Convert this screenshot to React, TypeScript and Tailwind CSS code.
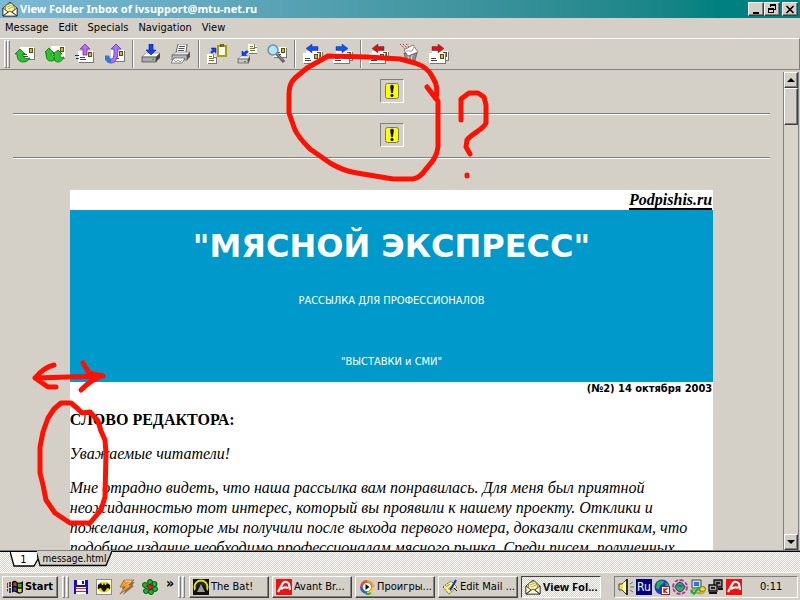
import type { ReactNode } from "react";

const raised =
  "border border-t-white border-l-white border-r-[#404040] border-b-[#404040] shadow-[inset_-1px_-1px_0_#808080] bg-[#d4d0c8]";
const dither =
  "bg-[repeating-conic-gradient(#ffffff_0_25%,#d4d0c8_0_50%)] bg-[length:2px_2px]";

function Icon({ w = 20, h = 20, children }: { w?: number; h?: number; children: ReactNode }) {
  return (
    <svg width={w} height={h} viewBox={`0 0 ${w} ${h}`} className="shrink-0" aria-hidden="true">
      {children}
    </svg>
  );
}

function Letter({ x, y, w = 14, h = 10 }: { x: number; y: number; w?: number; h?: number }) {
  return (
    <g shapeRendering="crispEdges">
      <rect x={x + 1} y={y + 1} width={w} height={h} fill="#777" />
      <rect x={x} y={y} width={w} height={h} fill="#fff" />
      <rect x={x + w - 5} y={y + 1} width="4" height="5" fill="#5a4a10" />
      <rect x={x + w - 4} y={y + 2} width="2" height="3" fill="#d8b820" />
      <path d={`M${x + 2} ${y + h - 4.5}h5M${x + 2} ${y + h - 2.5}h6`} stroke="#444" />
    </g>
  );
}

function Sheet({ x, y }: { x: number; y: number }) {
  return (
    <g shapeRendering="crispEdges">
      <path d={`M${x} ${y}h6l3 3v7h-9z`} fill="#fffde0" />
      <path d={`M${x + 0.5} ${y + 9.5}h8.500v-6.500h-3v-3`} fill="none" stroke="#777" />
      <path d={`M${x + 2} ${y + 2.5}h3M${x + 2} ${y + 4.5}h5M${x + 2} ${y + 6.5}h5`} stroke="#77773a" />
    </g>
  );
}

function Tray({ x, y }: { x: number; y: number }) {
  return (
    <g>
      <path d={`M${x} ${y + 3}l3-3h9l-2 3z`} fill="#f4f4f4" stroke="#888" strokeWidth=".6" />
      <path d={`M${x + 10} ${y + 3}l2-3v4l-2 4z`} fill="#555" />
      <rect x={x} y={y + 3} width="10" height="4" fill="#c8c8c8" stroke="#555" strokeWidth=".7" />
      <rect x={x + 6} y={y + 5} width="2" height="1" fill="#1a1" />
    </g>
  );
}

const ReplyIcon = () => (
  <Icon>
    <Letter x={5} y={3} w={14} h={12} />
    <path d="M5 5l5 5H8c0 4 2 5 7 4-2 3-4 4-7 4-4 0-6-3-6-8H0z" fill="#2cc42c" stroke="#0b6a10" strokeWidth=".8" />
  </Icon>
);
const ReplyAllIcon = () => (
  <Icon>
    <Letter x={6} y={2} w={14} h={12} />
    <path d="M4 4l5 5H7c0 4 1 5 4 5-2 3-3 3-5 3-4 0-5-3-5-8h-2z" fill="#2cc42c" stroke="#0b6a10" strokeWidth=".8" />
    <path d="M13 6l4 4h-2c0 3 1 4 4 3-2 4-4 5-6 5-4 0-4-3-4-8H8z" fill="#2cc42c" stroke="#0b6a10" strokeWidth=".8" />
  </Icon>
);
const ForwardIcon = () => (
  <Icon>
    <Letter x={3} y={7} w={15} h={11} />
    <path d="M0 11.500h4M1 14.500h3" stroke="#333" />
    <path d="M10 0l5 5h-3v6H8V5H5z" fill="#c268f0" stroke="#7030a0" strokeWidth=".8" />
  </Icon>
);
const RedirectIcon = () => (
  <Icon>
    <Letter x={6} y={6} w={13} h={11} />
    <path d="M11 0l5 5h-3c0 9-2 14-7 14-4 0-6-3-6-7h4c0 2 0 3 2 3 3 0 3-4 3-10H6z" fill="#b070ff" stroke="#5040b0" strokeWidth=".8" />
    <path d="M0 12h4c0 2 0 3 2 3v4c-4 0-6-3-6-7z" fill="#2a78e8" />
  </Icon>
);
const SaveIcon = () => (
  <Icon>
    <path d="M1 13l4-4h14l-4 4z" fill="#fafafa" stroke="#777" strokeWidth=".6" />
    <rect x="1" y="13" width="14" height="5" fill="#aaa" stroke="#444" strokeWidth=".7" />
    <path d="M15 13l4-4v5l-4 4z" fill="#444" />
    <rect x="11" y="15" width="2" height="1" fill="#0b0" />
    <path d="M8 0h4v6h3l-5 5-5-5h3z" fill="#1440f0" stroke="#0018a0" strokeWidth=".6" />
  </Icon>
);
const PrintIcon = () => (
  <Icon>
    <path d="M7 0h9l-1 9H5z" fill="#fff" stroke="#444" strokeWidth=".8" />
    <path d="M8 2.500h6M7.500 4.500h6M7 6.500h6" stroke="#555" />
    <path d="M1 11l4-3h14l-3 3z" fill="#e8e8e8" stroke="#777" strokeWidth=".6" />
    <path d="M1 11h15v5H1z" fill="#bbb" stroke="#555" strokeWidth=".7" />
    <path d="M16 11l3-3v5l-3 3z" fill="#555" />
    <path d="M3 14h11l-3 5H0z" fill="#fff" stroke="#555" strokeWidth=".7" />
    <path d="M3 16l2 2 2-2 2 2 2-2" fill="none" stroke="#888" strokeWidth=".8" />
  </Icon>
);
const BlueDiag = ({ d }: { d: string }) => <path d={d} fill="#1440f0" stroke="#0018a0" strokeWidth=".5" />;
const CopyIcon = () => (
  <Icon>
    <Sheet x={0} y={10} />
    <BlueDiag d="M4 4h5v5L7 7.500 5 9.500 3.500 8 5.500 6z" />
    <rect x="11" y="2" width="8" height="10" fill="#fff" stroke="#a8a000" strokeWidth="2" />
    <rect x="13" y="0" width="4" height="3" fill="#6a6a30" />
  </Icon>
);
const MoveIcon = () => (
  <Icon>
    <Sheet x={11} y={0} />
    <BlueDiag d="M5 12V7l2 1.500 3-2L11.500 8 8.500 10 10 12z" />
    <Tray x={1} y={12} />
  </Icon>
);
const FindIcon = () => (
  <Icon>
    <Letter x={6} y={3} w={13} h={10} />
    <circle cx="6" cy="6" r="5" fill="#b4e4f8" stroke="#6a90a8" strokeWidth="1.500" />
    <path d="M10 10l7 8" stroke="#555" strokeWidth="3" />
    <path d="M10 10l6.500 7" stroke="#aaa" />
  </Icon>
);
function StackIcon({ dir, color }: { dir: "left" | "right"; color: string }) {
  return (
    <Icon>
      <Letter x={3} y={7} w={16} h={9} />
      <Letter x={0} y={9} w={16} h={10} />
      <path
        d={dir === "left" ? "M3 4.500L9 0v2.500h6v4H9V9z" : "M15 4.500L9 0v2.500H3v4h6V9z"}
        fill={color}
        stroke="#202060"
        strokeWidth=".4"
      />
    </Icon>
  );
}
const DeleteIcon = () => (
  <Icon>
    <path d="M1 0l5 5M4 0l5 5M7 0l3 3" stroke="#e03030" strokeDasharray="1.500 1" />
    <path d="M5 9l2 9 8 2 3-11z" fill="#8c8c8c" stroke="#555" strokeWidth=".7" />
    <path d="M9 11l1 7M13 11l-1 7" stroke="#ddd" />
    <path d="M5 6l9-5 5 7-10 4z" fill="#fff" stroke="#555" strokeWidth=".7" />
    <path d="M7 7l6 0 2-4" fill="none" stroke="#777" strokeWidth=".7" />
  </Icon>
);

const toolGroups: { name: string; icon: ReactNode }[][] = [
  [
    { name: "Reply", icon: <ReplyIcon /> },
    { name: "Reply to all", icon: <ReplyAllIcon /> },
    { name: "Forward", icon: <ForwardIcon /> },
    { name: "Redirect", icon: <RedirectIcon /> },
  ],
  [
    { name: "Save", icon: <SaveIcon /> },
    { name: "Print", icon: <PrintIcon /> },
  ],
  [
    { name: "Copy", icon: <CopyIcon /> },
    { name: "Move", icon: <MoveIcon /> },
    { name: "Find", icon: <FindIcon /> },
  ],
  [
    { name: "Previous", icon: <StackIcon dir="left" color="#1450ff" /> },
    { name: "Next", icon: <StackIcon dir="right" color="#1450ff" /> },
  ],
  [
    { name: "Previous unread", icon: <StackIcon dir="left" color="#e01010" /> },
    { name: "Delete", icon: <DeleteIcon /> },
    { name: "Next unread", icon: <StackIcon dir="right" color="#e01010" /> },
  ],
];

const OpenLetter = () => (
  <Icon w={16} h={16}>
    <path d="M1 7l7-6 7 6v8H1z" fill="#f4e87a" stroke="#222" strokeWidth=".8" />
    <path d="M4 4l6-2 3 6-5 4-5-3z" fill="#fff68a" stroke="#555" strokeWidth=".7" />
    <path d="M5 6l5-2M6 8l5-2" stroke="#999" strokeWidth=".8" />
    <path d="M1 7l5 4-5 4zM15 7l-5 4 5 4zM1 15l7-5 7 5z" fill="#fffbd8" stroke="#222" strokeWidth=".7" />
  </Icon>
);
const BatIcon = () => (
  <Icon w={16} h={16}>
    <rect width="16" height="16" fill="#111" />
    <circle cx="8" cy="8" r="6.500" fill="#222" stroke="#e8e000" strokeWidth="2" />
    <path d="M0 16c1-5 4-9 8-10 4 1 7 5 8 10z" fill="#111" />
    <path d="M8 5l4 8H4z" fill="#999" />
  </Icon>
);
const AvantIcon = () => (
  <Icon w={16} h={16}>
    <rect width="16" height="16" fill="#f01010" />
    <path d="M2 13L7 4c2-2 5-1 6 1l1 6M5 10c3-2 5-2 7-1" fill="none" stroke="#fff" strokeWidth="2.200" />
  </Icon>
);
const PlayerIcon = () => (
  <Icon w={16} h={16}>
    <path d="M8 8V1a7 7 0 0 1 7 7z" fill="#f0a020" />
    <path d="M8 8h7a7 7 0 0 1-7 7z" fill="#f8d020" />
    <path d="M8 8v7a7 7 0 0 1-7-7z" fill="#2060d8" />
    <path d="M8 8H1a7 7 0 0 1 7-7z" fill="#e85020" />
    <path d="M7 15a7 7 0 0 0 5-1" stroke="#38a838" strokeWidth="2" fill="none" />
    <circle cx="8" cy="8" r="4.500" fill="#fff" stroke="#567" strokeWidth=".7" />
    <path d="M6.500 5l4 3-4 3z" fill="#111" />
  </Icon>
);
const EditIcon = () => (
  <Icon w={16} h={16}>
    <path d="M1 8l8-6 6 6-8 7z" fill="#fff27a" stroke="#333" strokeWidth=".8" strokeDasharray="1.500 .8" />
    <path d="M4 8l4-3M6 10l5-4M8 12l4-3" stroke="#777" strokeWidth=".8" />
    <path d="M14 1l-4 7-2 3" stroke="#1030d0" strokeWidth="2" fill="none" />
    <path d="M12 9l3 3" stroke="#111" />
  </Icon>
);
const FloppyIcon = () => (
  <Icon w={16} h={16}>
    <path d="M1 1h14v14H1z" fill="#1010c8" />
    <path d="M4 1h8v5H4z" fill="#fff" />
    <path d="M9 2h2v3H9z" fill="#1010c8" />
    <path d="M3 8h10v7H3z" fill="#fff" />
    <path d="M3 9.500h10M3 12.500h10" stroke="#e02020" />
  </Icon>
);
const YellowBatIcon = () => (
  <Icon w={16} h={16}>
    <rect x=".5" y=".5" width="15" height="15" fill="#fff" stroke="#333" strokeDasharray="1 1" />
    <ellipse cx="8" cy="8" rx="7" ry="5.500" fill="#f0e000" />
    <path d="M2 6l3-2 1 2h1l1-2 1 2h1l1-2 3 2 0 4-3-1-1 2-2 2-2-2-1-2-3 1z" fill="#111" />
  </Icon>
);
const BoltIcon = () => (
  <Icon w={16} h={16}>
    <path d="M6 3h10l-4 4h3L4 16l3-6H3z" fill="#777" />
    <path d="M5 1h10l-5 5h4L1 15l5-7H1z" fill="#f09838" stroke="#8a5010" strokeWidth=".6" />
    <path d="M6 2h6L8 6" stroke="#ffd9a0" fill="none" />
  </Icon>
);
const FlowerIcon = () => (
  <Icon w={16} h={16}>
    <g fill="#18b828" stroke="#044a08" strokeWidth=".9">
      <circle cx="8" cy="3" r="2.500" />
      <circle cx="12.500" cy="5" r="2.500" />
      <circle cx="13" cy="10" r="2.500" />
      <circle cx="9" cy="13" r="2.500" />
      <circle cx="4" cy="12" r="2.500" />
      <circle cx="3" cy="6" r="2.500" />
    </g>
    <circle cx="8" cy="8" r="2.500" fill="#e02030" stroke="#300" strokeWidth=".6" />
  </Icon>
);
const WindowsFlag = () => (
  <Icon w={16} h={14}>
    <path d="M5 2c2-2 4-1 5 0s4 1 6-1v11c-2 2-4 2-6 1s-3-2-5 0z" fill="#111" />
    <path d="M6.500 3c1-1 2-1 3 0v3.500c-1-1-2-1-3 0z" fill="#e83020" />
    <path d="M11 3.500c1 .5 2.500.5 3.500 0V7c-1 .5-2.500.5-3.500 0z" fill="#30b030" />
    <path d="M6.500 8c1-1 2-1 3 0v3c-1-1-2-1-3 0z" fill="#2848e0" />
    <path d="M11 8.500c1 .5 2.500.5 3.500 0V12c-1 .5-2.500.5-3.500-.5z" fill="#f0d020" />
    <path d="M0 4h1M2 3h2M0 7h1M2 6h2M0 10h1M2 9h2M2 12h2" stroke="#111" strokeWidth="1.500" />
    <path d="M0 5.500h1M2 4.500h2" stroke="#e83020" />
    <path d="M0 11h1M2 10.500h2" stroke="#2848e0" />
  </Icon>
);
const SpeakerIcon = () => (
  <Icon w={16} h={16}>
    <path d="M1 5h3l5-5v16l-5-5H1z" fill="#f0e060" stroke="#222" strokeWidth=".8" />
    <path d="M5 4l3-2v12l-3-3z" fill="#fff8b0" />
    <path d="M9 0v16" stroke="#111" strokeWidth="1.500" />
    <path d="M12 5l3-2M12 8h4M12 11l3 2" stroke="#666" />
  </Icon>
);
const GlobeKIcon = () => (
  <Icon w={16} h={16}>
    <circle cx="8" cy="8" r="7.500" fill="#1838d8" />
    <path d="M3 4c2-3 5-3 7-2l-1 3-3 1-1 4-3-1zM11 3l3 2 1 3h-3z" fill="#20b838" />
    <rect x="7.500" y="7.500" width="8" height="8" fill="#fff" stroke="#c01010" />
    <path d="M10 9v5M13.500 9L10 12l3.500 2" stroke="#d01010" strokeWidth="1.400" fill="none" />
  </Icon>
);
const NetGlobeIcon = () => (
  <Icon w={16} h={16}>
    <circle cx="8" cy="8" r="4.500" fill="#38a858" stroke="#246" />
    <path d="M5 7c2-2 4 2 6-1" stroke="#3060c0" strokeWidth="2" fill="none" />
    <circle cx="8" cy="8" r="7" fill="none" stroke="#e81890" strokeWidth="1.800" strokeDasharray="3.500 2" />
    <path d="M0 8h3M13 8h3M8 0v3M8 13v3" stroke="#18a0a0" />
  </Icon>
);
const PcCheckIcon = () => (
  <Icon w={16} h={16}>
    <path d="M2 1h9v8H2z" fill="#d8d8d8" stroke="#444" />
    <path d="M4 3h5v4H4z" fill="#2878e0" />
    <path d="M1 11h9v3H1z" fill="#ccc" stroke="#555" strokeWidth=".7" />
    <ellipse cx="12.500" cy="10" rx="3" ry="2.500" fill="#f0d830" stroke="#554400" strokeWidth=".7" />
    <path d="M7 14c3 1 6 1 8-2" stroke="#c8a800" strokeWidth="1.500" fill="none" />
    <path d="M1 11l3 4 5-7" stroke="#10c010" strokeWidth="2" fill="none" />
  </Icon>
);
const ComputersIcon = () => (
  <Icon w={16} h={16}>
    <g stroke="#111" strokeWidth="1.300">
      <path d="M6 1h8v7H6z" fill="#888" />
      <path d="M1 6h8v6H1z" fill="#aaa" />
      <path d="M1 14h8M10 10h5" strokeWidth="2" />
    </g>
    <path d="M8 3h4v2H8zM3 8h4v2H3z" fill="#222" />
  </Icon>
);

const windowButton = `${raised} flex h-[14px] w-4 items-center justify-center`;

function TitleBar() {
  return (
    <header className="flex h-[18px] shrink-0 items-center bg-linear-to-r from-[#7cb9d8] to-[#008080] to-90% pr-[2px] pl-[2px]">
      <OpenLetter />
      <h1 className="ml-[2px] flex-1 truncate font-['Noto_Sans','DejaVu_Sans',sans-serif] text-[11px] leading-[18px] font-bold text-white">
        View Folder Inbox of ivsupport@mtu-net.ru
      </h1>
      <button type="button" aria-label="Minimize" className={windowButton}>
        <Icon w={10} h={9}>
          <path d="M2 7h6v2H2z" fill="#000" />
        </Icon>
      </button>
      <button type="button" aria-label="Restore" className={windowButton}>
        <Icon w={10} h={10}>
          <path d="M3.500 3V.5h5v5H7M3 1.500h6M1.500 4.500h5v4h-5zM1 5.500h6" fill="none" stroke="#000" shapeRendering="crispEdges" />
        </Icon>
      </button>
      <button type="button" aria-label="Close" className={`${windowButton} ml-[2px]`}>
        <Icon w={10} h={9}>
          <path d="M1.500 1l7 7M8.500 1l-7 7" stroke="#000" strokeWidth="1.700" />
        </Icon>
      </button>
    </header>
  );
}

function MenuBar() {
  return (
    <nav className="flex h-5 shrink-0 items-center gap-[10px] pl-[5px]">
      {["Message", "Edit", "Specials", "Navigation", "View"].map((m) => (
        <button key={m} type="button">
          {m}
        </button>
      ))}
    </nav>
  );
}

function Grip() {
  return <span className="h-full w-[3px] shrink-0 border border-t-white border-l-white border-r-[#808080] border-b-[#808080]" />;
}

function Toolbar() {
  return (
    <div className="flex h-8 shrink-0 items-center border-t border-r border-b border-t-white border-r-[#808080] border-b-[#808080] pl-1">
      <div className="flex h-7">
        <Grip />
        <Grip />
      </div>
      {toolGroups.map((group, i) => (
        <div key={group[0].name} className="flex items-center">
          {i > 0 && <span className="mx-[2px] h-7 w-[2px] border-r border-l border-r-white border-l-[#808080]" />}
          {group.map((tool) => (
            <button key={tool.name} type="button" aria-label={tool.name} className="flex h-7 w-[30px] items-center justify-center">
              {tool.icon}
            </button>
          ))}
        </div>
      ))}
    </div>
  );
}

function BlockedImage() {
  return (
    <div>
      <div className="mx-auto flex size-6 items-center justify-center border border-t-[#808080] border-l-[#808080] border-r-white border-b-white">
        <Icon w={14} h={16}>
          <rect x=".5" y=".5" width="13" height="15" rx="2" fill="#ffff00" stroke="#777" />
          <path d="M5.500 3.500a1.500 1.500 0 0 1 3 0L7.500 10h-1z" fill="#000" stroke="#000" strokeWidth=".6" />
          <circle cx="7" cy="12.500" r="1.500" fill="#000" />
        </Icon>
      </div>
      <hr className="mt-[10px] mb-2 h-[2px] border-t border-b border-t-[#808080] border-b-white" />
    </div>
  );
}

function Newsletter() {
  return (
    <article className="mx-auto mt-[31px] w-[85%] bg-white font-['Liberation_Serif','Times_New_Roman',serif] text-[16px] leading-5 text-black">
      <p className="flex h-5 justify-end pr-px font-bold italic">
        <a href="#podpishis" className="border-b-2 border-black">
          Podpishis.ru
        </a>
      </p>
      <div className="flex h-[172px] flex-col items-center bg-[#0099cc] text-center font-['DejaVu_Sans_Condensed','DejaVu_Sans',sans-serif] text-[11px] text-white">
        <h2 className="mt-4 font-['DejaVu_Sans',sans-serif] text-[32px] leading-10 font-bold">"МЯСНОЙ ЭКСПРЕСС"</h2>
        <p className="mt-[25px]">РАССЫЛКА ДЛЯ ПРОФЕССИОНАЛОВ</p>
        <p className="mt-[41px]">"ВЫСТАВКИ и СМИ"</p>
      </div>
      <p className="pr-px text-right font-['DejaVu_Sans_Condensed','DejaVu_Sans',sans-serif] text-[11px] leading-[14px] font-bold">
        (№2) 14 октября 2003
      </p>
      <h3 className="mt-[14px] font-bold">СЛОВО РЕДАКТОРА:</h3>
      <p className="mt-[14px] italic">Уважаемые читатели!</p>
      <p className="mt-[14px] italic">
        Мне отрадно видеть, что наша рассылка вам понравилась. Для меня был приятной неожиданностью тот
        интерес, который вы проявили к нашему проекту. Отклики и пожелания, которые мы получили после
        выхода первого номера, доказали скептикам, что подобное издание необходимо профессионалам
        мясного рынка. Среди писем, полученных
      </p>
    </article>
  );
}

function Scrollbar() {
  const arrow = `${raised} flex h-4 w-full shrink-0 items-center justify-center`;
  return (
    <div className="mt-[2px] mr-px flex w-4 shrink-0 flex-col border-r border-l border-r-[#808080] border-l-[#808080] bg-[#d8d4cc]">
      <button type="button" aria-label="Scroll up" className={arrow}>
        <Icon w={8} h={4}>
          <path d="M4 0l4 4H0z" fill="#000" />
        </Icon>
      </button>
      <div className={`${raised} h-[37px] w-full`} />
      <div className="flex-1" />
      <button type="button" aria-label="Scroll down" className={arrow}>
        <Icon w={8} h={4}>
          <path d="M4 4l4-4H0z" fill="#000" />
        </Icon>
      </button>
    </div>
  );
}

function PartTabs() {
  return (
    <div className={`${dither} flex h-[22px] shrink-0 border-t border-[#808080]`}>
      <div className="w-[10px] border-t border-black" />
      <button type="button" className="relative h-4 w-[27px] border-t border-black">
        <svg width="28" height="16" viewBox="0 0 28 16" className="absolute -top-px left-0" aria-hidden="true">
          <path d="M0 1l4 14h20l4-7-3-7z" fill="#fff" />
          <path d="M0 .5l4 14.500h20l4-7" fill="none" stroke="#000" strokeWidth="1.300" />
        </svg>
        <span className="relative">1</span>
      </button>
      <button type="button" className="relative h-4 w-[75px] text-[10px]">
        <svg width="75" height="16" viewBox="0 0 75 16" className="absolute top-0 left-0" aria-hidden="true">
          <path d="M-1 0l4 14.500h66L75 0z" fill="#d4d0c8" />
          <path d="M-1 0l4 14.500h66L75 0" fill="none" stroke="#000" strokeWidth="1.300" />
        </svg>
        <span className="relative">message.html</span>
      </button>
      <div className="flex-1 border-t border-black" />
    </div>
  );
}

const quickLaunch = [
  { name: "Save tool", icon: <FloppyIcon /> },
  { name: "The Bat", icon: <YellowBatIcon /> },
  { name: "Winamp", icon: <BoltIcon /> },
  { name: "ICQ", icon: <FlowerIcon /> },
];

const tasks = [
  { title: "The Bat!", icon: <BatIcon /> },
  { title: "Avant Br...", icon: <AvantIcon /> },
  { title: "Проигры...", icon: <PlayerIcon /> },
  { title: "Edit Mail ...", icon: <EditIcon /> },
];

function Taskbar() {
  return (
    <footer className="flex h-7 shrink-0 items-center border-t border-white px-[2px]">
      <button type="button" className={`${raised} flex h-[22px] w-14 items-center justify-center gap-[2px] text-[11px] font-bold`}>
        <WindowsFlag />
        Start
      </button>
      <div className="ml-1 flex h-[22px] gap-px">
        <Grip />
        <Grip />
      </div>
      <div className="ml-1 flex gap-[7px]">
        {quickLaunch.map((q) => (
          <button key={q.name} type="button" aria-label={q.name}>
            {q.icon}
          </button>
        ))}
      </div>
      <button type="button" aria-label="More" className="ml-2 flex h-[22px] w-3 text-[14px] leading-[14px] font-bold">
        »
      </button>
      <div className="mr-1 flex h-[22px] gap-px">
        <Grip />
        <Grip />
      </div>
      <div className="flex gap-[3px]">
        {tasks.map((t) => (
          <button key={t.title} type="button" className={`${raised} flex h-[22px] w-20 items-center gap-[2px] pl-[3px] whitespace-nowrap`}>
            {t.icon}
            {t.title}
          </button>
        ))}
        <button
          type="button"
          className={`${dither} flex h-[22px] w-20 items-center gap-[2px] border border-t-[#404040] border-r-white border-b-white border-l-[#404040] pl-[3px] font-['Noto_Sans','DejaVu_Sans',sans-serif] font-bold whitespace-nowrap`}
        >
          <OpenLetter />
          View Fol...
        </button>
      </div>
      <div className="ml-auto flex h-[22px] w-[184px] items-center gap-[2px] border border-t-[#808080] border-r-white border-b-white border-l-[#808080] pl-[3px]">
        <SpeakerIcon />
        <span className="flex size-4 items-center justify-center bg-[#000080] text-[12px] leading-4 text-white">Ru</span>
        <GlobeKIcon />
        <NetGlobeIcon />
        <PcCheckIcon />
        <ComputersIcon />
        <AvantIcon />
        <time className="ml-4">0:11</time>
      </div>
    </footer>
  );
}

function PenMarks() {
  return (
    <svg
      width="800"
      height="600"
      viewBox="0 0 800 600"
      className="pointer-events-none absolute top-0 left-0"
      fill="none"
      stroke="#ff1000"
      strokeWidth="5"
      strokeLinecap="round"
      strokeLinejoin="round"
      aria-hidden="true"
    >
      <path d="M427 87L436 99C438 90 437 84 433 78C430 71 424 66 415 63L400 59L367 57L328 56L307 68L295 78C289 84 289 90 289 98V113L295 130C299 138 304 143 310 149L330 163C340 169 350 172 357 173L393 179H413C420 178 424 172 426 169C433 161 437 156 438 147V101L427 87" />
      <path d="M461 120V99L469 93H478L484 97L486 105V123C483 130 472 133 467 140L466 147L470 154M467 175v1" />
      <path d="M35 378L103 376M54 365C45 367 40 372 35 378L48 387H56M83 363L89 373L102 376C95 378 87 384 81 390" />
      <path d="M61 403H71L78 409L82 413L90 412L98 421L101 431L105 440L106 453L105 497L101 510L90 523H70L55 513L46 500L43 485L40 473V447L43 432L48 418L54 409Z" />
    </svg>
  );
}

export default function App() {
  return (
    <div className="relative flex h-screen flex-col overflow-hidden bg-[#d4d0c8] font-['DejaVu_Sans_Condensed','DejaVu_Sans',sans-serif] text-[11px] leading-[14px] text-black">
      <TitleBar />
      <MenuBar />
      <Toolbar />
      <main className="flex min-h-0 flex-1">
        <div className="min-w-0 flex-1 overflow-hidden px-[13px] pt-[9px]">
          <BlockedImage />
          <BlockedImage />
          <Newsletter />
        </div>
        <Scrollbar />
      </main>
      <PartTabs />
      <Taskbar />
      <PenMarks />
    </div>
  );
}
